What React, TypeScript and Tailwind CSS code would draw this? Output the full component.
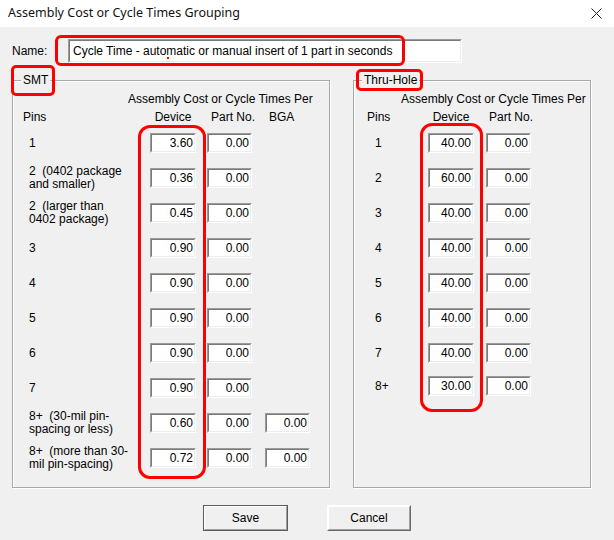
import React from "react";

type Row = { label: string; device: string; part: string; bga?: string; mt?: string };

const smtRows: Row[] = [
  { label: "1", device: "3.60", part: "0.00" },
  { label: "2  (0402 package\nand smaller)", device: "0.36", part: "0.00" },
  { label: "2  (larger than\n0402 package)", device: "0.45", part: "0.00" },
  { label: "3", device: "0.90", part: "0.00" },
  { label: "4", device: "0.90", part: "0.00" },
  { label: "5", device: "0.90", part: "0.00" },
  { label: "6", device: "0.90", part: "0.00" },
  { label: "7", device: "0.90", part: "0.00" },
  { label: "8+  (30-mil pin-\nspacing or less)", device: "0.60", part: "0.00", bga: "0.00" },
  { label: "8+  (more than 30-\nmil pin-spacing)", device: "0.72", part: "0.00", bga: "0.00" },
];

const thruRows: Row[] = [
  { label: "1", device: "40.00", part: "0.00" },
  { label: "2", device: "60.00", part: "0.00" },
  { label: "3", device: "40.00", part: "0.00" },
  { label: "4", device: "40.00", part: "0.00" },
  { label: "5", device: "40.00", part: "0.00" },
  { label: "6", device: "40.00", part: "0.00" },
  { label: "7", device: "40.00", part: "0.00" },
  { label: "8+", device: "30.00", part: "0.00", mt: "mt-[-2px]" },
];

function Field({ value, className }: { value: string; className: string }) {
  return (
    <div className={`h-[20px] shrink-0 border border-t-[#9a9a9a] border-l-[#9a9a9a] border-b-white border-r-white ${className}`}>
      <div className="h-full border border-t-[#7a7a7a] border-l-[#7a7a7a] border-b-[#ececec] border-r-[#ececec] bg-white pr-[1px] text-right leading-[16px]">
        {value}
      </div>
    </div>
  );
}

function GroupBox({ title, className, children }: { title: string; className: string; children: React.ReactNode }) {
  return (
    <div className={`relative h-[408px] border border-[#a8a8a8] shadow-[1px_1px_0_#fff,inset_1px_1px_0_#fff] ${className}`}>
      <span className="absolute -top-[8px] left-[8px] bg-[#f0f0f0] px-[2px] leading-[14px]">{title}</span>
      {children}
    </div>
  );
}

function WinButton({ label, isDefault }: { label: string; isDefault?: boolean }) {
  return (
    <div className={`h-[26px] border ${isDefault ? "w-[85px] border-[#5a5a5a]" : "w-[84px] border-t-white border-l-white border-b-[#696969] border-r-[#696969]"}`}>
      <div className="flex h-full items-center justify-center border border-t-white border-l-white border-b-[#a0a0a0] border-r-[#a0a0a0] bg-[#f0f0f0]">
        {label}
      </div>
    </div>
  );
}

export default function App() {
  return (
    <div className="relative h-[540px] w-[614px] overflow-hidden bg-[#f0f0f0] font-['Liberation_Sans',Arial,sans-serif] text-[12px] text-black">
      {/* Title bar */}
      <div className="flex h-[27px] items-center justify-between bg-white pl-[8px] pr-[12px]">
        <span className="font-['Noto_Sans',sans-serif] text-[12.5px] text-[#111]">Assembly Cost or Cycle Times Grouping</span>
        <svg width="11" height="11" viewBox="0 0 11 11" className="mt-[-1px]">
          <path d="M0.5 0.5 L10.5 10.5 M10.5 0.5 L0.5 10.5" stroke="#222" strokeWidth="1" />
        </svg>
      </div>

      <div className="px-[12px]">
        {/* Name */}
        <div className="mt-[12px] flex items-center">
          <span className="w-[56px]">Name:</span>
          <div className="h-[24px] w-[394px] border border-t-[#9a9a9a] border-l-[#9a9a9a] border-b-white border-r-white">
            <div className="h-full border border-t-[#7a7a7a] border-l-[#7a7a7a] border-b-[#ececec] border-r-[#ececec] bg-white pl-[3px] leading-[20px]">
              Cycle Time - automatic or manual insert of 1 part in seconds
            </div>
          </div>
        </div>

        <div className="mt-[17px] flex gap-[23px]">
          {/* SMT */}
          <GroupBox title="SMT" className="w-[318px]">
            <div className="ml-[115px] mt-[11px] w-[180px] whitespace-nowrap text-center leading-[14px]">
              Assembly Cost or Cycle Times Per
            </div>
            <div className="mt-[4px] flex leading-[14px]">
              <span className="w-[137px] pl-[10px]">Pins</span>
              <span className="w-[46px] whitespace-nowrap text-center">Device</span>
              <span className="ml-[11px] w-[45px] whitespace-nowrap pl-[4px]">Part No.</span>
              <span className="ml-[13px] w-[45px] whitespace-nowrap pl-[4px]">BGA</span>
            </div>
            <div className="mt-[9px] flex flex-col gap-[15px]">
              {smtRows.map((r, i) => (
                <div key={i} className="flex h-[20px] items-center">
                  <span className="w-[137px] shrink-0 whitespace-pre pl-[16px] leading-[13px]">{r.label}</span>
                  <Field value={r.device} className="w-[46px]" />
                  <Field value={r.part} className="ml-[11px] w-[45px]" />
                  {r.bga && <Field value={r.bga} className="ml-[13px] w-[45px]" />}
                </div>
              ))}
            </div>
          </GroupBox>

          {/* Thru-Hole */}
          <GroupBox title="Thru-Hole" className="w-[238px]">
            <div className="ml-[47px] mt-[11px] w-[178px] whitespace-nowrap text-center leading-[14px]">
              Assembly Cost or Cycle Times Per
            </div>
            <div className="mt-[4px] flex leading-[14px]">
              <span className="w-[74px] pl-[13px]">Pins</span>
              <span className="w-[46px] whitespace-nowrap text-center">Device</span>
              <span className="ml-[12px] w-[45px] whitespace-nowrap pl-[3px]">Part No.</span>
            </div>
            <div className="mt-[9px] flex flex-col gap-[15px]">
              {thruRows.map((r, i) => (
                <div key={i} className={`flex h-[20px] items-center ${r.mt ?? ""}`}>
                  <span className="w-[74px] shrink-0 pl-[21px]">{r.label}</span>
                  <Field value={r.device} className="w-[46px]" />
                  <Field value={r.part} className="ml-[12px] w-[45px]" />
                </div>
              ))}
            </div>
          </GroupBox>
        </div>

        {/* Buttons */}
        <div className="mt-[17px] flex justify-center gap-[39px]">
          <WinButton label="Save" isDefault />
          <WinButton label="Cancel" />
        </div>
      </div>

      {/* Red annotation overlays */}
      <div className="pointer-events-none absolute left-[55px] top-[35px] h-[31px] w-[350px] rounded-[6px] border-[3px] border-[#ff0000]" />
      <div className="pointer-events-none absolute left-[167px] top-[57px] h-[2px] w-[2px] bg-[#ff0000]" />
      <div className="pointer-events-none absolute left-[11px] top-[65px] h-[31px] w-[44px] rounded-[5px] border-[3px] border-[#ff0000]" />
      <div className="pointer-events-none absolute left-[356px] top-[69px] h-[22px] w-[67px] rounded-[5px] border-[3px] border-[#ff0000]" />
      <div className="pointer-events-none absolute left-[138px] top-[125px] h-[354px] w-[68px] rounded-[12px] border-[3px] border-[#ff0000]" />
      <div className="pointer-events-none absolute left-[420px] top-[123px] h-[289px] w-[63px] rounded-[12px] border-[3px] border-[#ff0000]" />
    </div>
  );
}
